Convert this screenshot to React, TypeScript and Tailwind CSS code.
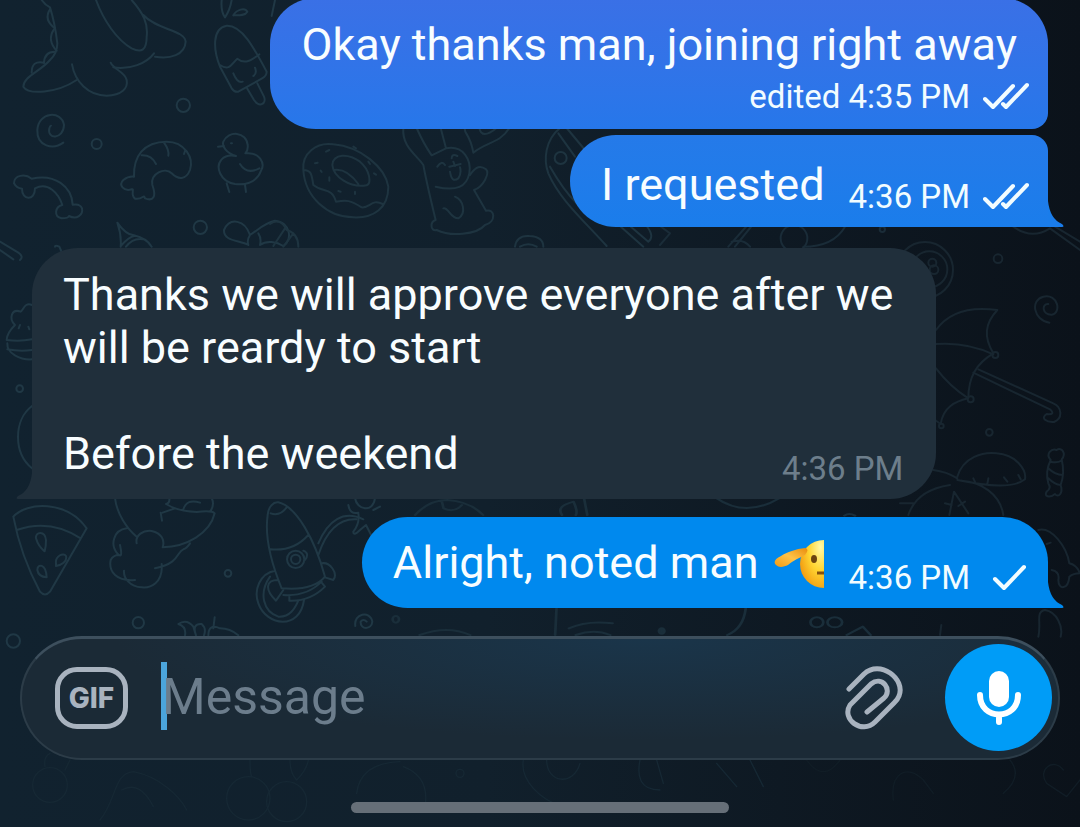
import React, { useState } from 'react';

type Status = 'read' | 'sent';

interface Message {
  id: number;
  text: string;
  lastLine?: string;
  time: string;
  mine: boolean;
  edited?: boolean;
  status?: Status;
  salute?: boolean;
  className: string;
}

const messages: Message[] = [
  {
    id: 1,
    text: 'Okay thanks man, joining right away',
    time: '4:35 PM',
    mine: true,
    edited: true,
    status: 'read',
    className: 'rounded-[46px] rounded-br-[16px] bg-linear-to-b from-[#3a70e6] to-[#2677ea] pt-5 pb-3',
  },
  {
    id: 2,
    text: 'I requested',
    time: '4:36 PM',
    mine: true,
    status: 'read',
    className: 'mt-[6px] rounded-l-[46px] rounded-tr-[16px] bg-linear-to-b from-[#257ae9] to-[#1a7deb] pt-[23px] pb-[10px]',
  },
  {
    id: 3,
    text: 'Thanks we will approve everyone after we\nwill be reardy to start\n\n',
    lastLine: 'Before the weekend',
    time: '4:36 PM',
    mine: false,
    className: 'mt-[21px] rounded-[46px] rounded-bl-none bg-[#202f3b] pt-5 pb-[10px]',
  },
  {
    id: 4,
    text: 'Alright, noted man',
    time: '4:36 PM',
    mine: true,
    status: 'sent',
    salute: true,
    className: 'mt-[18px] rounded-l-[46px] rounded-tr-[46px] bg-[#0089ee] pt-[19px] pb-[10px]',
  },
];

// Doodles are drawn on a 3x grid and grouped by screen area
function Wallpaper() {
  return (
    <svg
      className="absolute inset-0 h-full w-full"
      viewBox="0 0 1080 827"
      preserveAspectRatio="xMidYMid slice"
      fill="none"
      strokeWidth="6"
      strokeLinecap="round"
      strokeLinejoin="round"
      aria-hidden="true"
    >
      {/* Dinosaur, ice cream, spiral, shrimp, duck, bone */}
      <g transform="scale(0.33333)" stroke="#203845">
        <path d="M125 0Q135 15 150 22Q165 70 172 130Q172 160 150 180C120 215 70 230 70 260C85 285 170 280 230 240" />
        <path d="M150 28Q130 60 165 85M162 88Q140 120 170 152M165 155Q132 155 132 190M132 188Q95 180 95 218" />
        <path d="M288 0C310 60 350 120 395 145C425 160 440 150 440 110C445 70 430 40 395 0M430 45C470 90 555 90 557 125C555 165 510 178 465 170M462 160C440 190 390 210 340 202" />
        <path d="M216 193C225 245 265 287 320 287C365 285 385 265 380 240C375 215 340 208 332 188" />
        <path d="M665 0Q662 35 675 52Q690 30 695 0M700 46C710 28 735 22 742 35C735 48 715 46 700 46M815 48L825 0" />
        <path d="M660 200C640 150 635 85 680 77C725 75 760 140 800 215Q800 228 785 236L715 275Q704 278 695 265ZM660 195C690 215 695 190 712 176C735 195 755 180 778 163M700 220Q712 250 728 245M765 203Q772 220 760 228M742 266L762 300C780 325 800 310 792 290L772 250" />
        <circle cx="550" cy="316" r="20" />
        <circle cx="290" cy="432" r="15" />
        <circle cx="601" cy="682" r="20" />
        <path d="M190 428C160 450 110 440 112 390C115 335 185 330 192 375C190 420 140 418 148 385Q150 378 153 377" />
        <path d="M402 530C400 470 430 425 500 425C555 425 582 475 570 510C558 540 535 540 515 520C495 500 450 520 457 555C470 590 460 605 435 595C430 580 430 600 405 596C390 585 405 565 395 568C370 575 355 555 370 540Q385 528 402 530M425 466Q455 465 468 492M492 428Q508 450 505 467M556 450L552 462" />
        <path d="M708 468C680 460 665 440 670 425C685 390 740 395 743 435Q745 450 736 460C780 455 795 490 784 510C770 550 735 555 705 552C660 545 645 500 665 478Q680 462 708 468M654 440L672 438M720 492Q740 525 778 505M680 550L688 576M735 555L738 576M693 430L696 430" />
        <path d="M95 536C75 520 42 525 42 550Q50 565 66 566C65 600 105 605 105 565C145 545 175 580 187 615C165 620 160 650 185 655Q205 655 207 648C230 660 250 645 246 625Q240 610 218 614C215 560 165 520 95 536" />
        <path d="M362 740Q365 705 352 668Q378 705 402 706Q440 715 455 740M362 738Q385 712 402 708M378 740Q400 712 430 718M165 740Q165 735 178 740L185 756M0 725L55 758Q72 770 60 780M0 750L40 778" />
        <path d="M745 735C720 720 670 725 672 690C690 650 735 660 750 705C775 690 790 670 825 662C870 665 880 720 850 738C830 725 800 720 780 735M750 705Q740 720 745 735M775 700Q785 715 780 735" />
        {/* Acorn peeking out from behind the incoming bubble */}
        <path d="M96 915C75 905 70 930 62 935C35 925 25 955 45 975C30 990 20 1005 20 1020Q60 1025 96 1018M22 1030C20 1060 60 1080 96 1078M60 975L56 985M85 980L88 988M22 1048Q60 1055 96 1050M96 1218C40 1260 40 1360 96 1405" />
        <circle cx="59" cy="1166" r="10" />
      </g>
      {/* Donut, rabbit, skateboard */}
      <g transform="translate(270 0) scale(0.33333)" stroke="#1e3440">
        <path d="M100 510C95 460 140 425 190 433C270 440 345 500 355 560C355 625 310 655 250 652C170 650 105 590 100 510C125 510 125 525 130 555C160 580 185 560 198 605C230 600 240 600 275 622C300 625 305 595 338 612" />
        <path d="M187 495C190 460 235 460 270 485C300 510 305 550 290 556C240 565 190 530 187 495M192 510C220 505 245 525 265 552M135 490L143 488M168 455L178 450M178 532L178 542M205 573L212 575M255 575L255 582M312 520L318 524M295 485L300 492M152 512L155 516M250 440L258 445" />
        <path d="M400 384C395 440 440 465 460 495C470 550 485 610 497 660C480 665 480 695 500 690C540 710 620 705 645 675C680 665 675 625 648 632L612 570C640 560 660 520 648 508C625 490 610 510 600 525M440 384Q460 430 485 466L528 445L512 384M528 445C580 435 605 480 598 520C590 560 560 575 497 560M520 625C535 620 540 655 565 655C590 640 580 600 555 590" />
        <path d="M502 500Q515 480 525 495M545 475Q545 460 562 468M538 500L572 492M540 515Q545 550 565 535Q575 520 570 502M550 485L555 498M585 384C580 400 600 400 610 458C650 425 690 430 718 384M628 384Q635 420 680 384" />
        <path d="M870 384C825 420 820 480 835 520C870 600 940 660 1010 738M865 400L915 470M840 500Q880 570 920 610M890 384L945 450M1050 678L1120 740M1080 678L1135 725Q1155 710 1130 678" />
        <circle cx="872" cy="474" r="18" />
        <path d="M735 740Q740 705 778 708Q820 710 820 740M750 740Q775 725 800 740M0 672Q30 650 50 690Q85 700 85 740M10 738L45 685M40 740L70 700" />
      </g>
      {/* Wand and balloon between the bubbles */}
      <g transform="translate(660 0) scale(0.33333)" stroke="#1a2c38">
        <path d="M0 678L30 700L0 735M205 740L260 678M225 740L275 678M215 725Q250 715 270 740M430 740Q520 740 555 680" />
        <circle cx="402" cy="715" r="40" />
        <circle cx="667" cy="688" r="8" />
      </g>
      {/* Right edge: pool ball, umbrella, candy, beach */}
      <g transform="translate(900 220) scale(0.33333)" stroke="#182630">
        <circle cx="75" cy="150" r="84" />
        <circle cx="88" cy="148" r="54" />
        <circle cx="97" cy="128" r="12" />
        <circle cx="102" cy="149" r="13" />
        <circle cx="294" cy="116" r="13" />
        <circle cx="268" cy="637" r="10" />
        <path d="M340 20Q395 60 450 25L540 90M465 20L540 65M448 308C400 300 390 240 430 230C475 220 485 280 455 284C425 285 425 250 445 252" />
        <path d="M108 330C150 270 220 260 292 270C255 310 250 350 280 400C230 430 205 470 205 535C165 545 130 560 122 612L105 600M108 372Q200 365 280 403M108 445Q150 500 205 535" />
        <circle cx="286" cy="405" r="9" />
        <circle cx="212" cy="538" r="9" />
        <circle cx="124" cy="618" r="7" />
        <path d="M220 458L450 568Q468 585 440 582C420 595 440 608 462 606C490 595 485 560 460 550L235 448" />
        <path d="M172 770C190 710 250 695 290 700C350 705 380 750 375 778C340 805 270 800 172 780M100 750Q140 755 172 775M0 850L40 850M25 885Q50 810 150 795M185 782C240 785 300 820 310 885M220 775L226 788M265 775L262 792M312 772L322 785M355 765L362 778M148 885L162 815L205 880M135 850L155 855M195 845L175 858" />
        <path d="M452 720C435 700 455 685 470 690C485 680 500 700 485 718Q495 760 482 795C490 820 475 835 465 822C450 835 430 830 440 815Q455 805 445 790Q435 755 452 720M452 725Q470 730 485 722M445 745Q465 765 488 765M445 775Q465 795 482 795" />
        <path d="M415 930C455 920 500 980 508 1030Q530 1035 540 1060Q520 1060 508 1070C505 1110 475 1110 475 1080Q480 1055 455 1050M440 972L452 968M415 1250C425 1210 405 1175 435 1170C470 1175 490 1220 482 1250M120 1245L124 1215" />
      </g>
      {/* Pizza, chick, rocket */}
      <g transform="translate(0 480) scale(0.33333)" stroke="#203845">
        <path d="M40 110C80 65 200 60 260 145L150 335Q135 352 120 335C85 270 55 190 40 110M50 150Q150 115 242 175M108 175C105 155 135 150 138 180Q138 200 134 214Q115 200 108 175M168 250C165 230 190 215 198 228C202 245 185 255 168 258ZM112 270C112 250 138 250 140 292Q115 290 112 270" />
        <path d="M345 54C350 100 380 145 410 170M410 190C405 165 430 150 455 153C485 160 495 180 488 202C560 200 630 160 644 100Q635 90 590 96C550 95 520 85 498 72Q510 70 508 54M635 54Q645 75 630 95M550 88Q560 55 600 68M488 98L525 85M482 98L486 122M570 190Q560 205 550 208C530 215 540 250 465 265M485 252C490 310 450 325 425 322C390 320 370 295 372 272M405 300C350 305 325 275 332 240Q340 225 357 225M380 145C340 150 330 195 352 220Q370 240 360 195" />
        <path d="M845 325C810 240 795 160 803 105C805 80 820 65 835 67C890 80 945 180 975 290C950 320 900 330 845 325M812 100Q840 110 860 82M812 208Q880 215 925 165M850 345Q920 350 965 305M868 350L868 362Q930 365 975 320L965 308M835 300C795 300 795 330 828 362L850 330M965 250C990 245 1015 280 1000 300L975 292M825 272C780 280 760 330 775 370C800 440 900 450 912 360M810 290C775 340 790 395 835 410C870 412 885 385 895 362M955 190C985 120 1030 90 1090 118M955 225C980 150 1020 115 1070 118" />
        <circle cx="887" cy="238" r="26" />
        <circle cx="887" cy="238" r="14" />
        <path d="M1065 54C1070 90 1120 100 1125 54M1045 75Q1050 105 1075 98M1075 100Q1080 130 1060 155Q1060 170 1080 150L1098 135L1115 168M1120 90L1140 80M910 212Q930 220 915 240" />
        <circle cx="684" cy="280" r="10" />
        <circle cx="415" cy="428" r="17" />
        <circle cx="40" cy="483" r="20" />
        <path d="M555 466Q560 440 535 432Q560 415 580 440L588 466M588 466Q575 430 605 432Q620 445 612 466M625 466Q625 430 660 445Q690 445 715 466M644 412L640 445M1066 438C1060 400 1110 390 1117 425C1115 450 1080 450 1082 425Q1090 415 1100 425" />
      </g>
      {/* Strips above and below the last bubble */}
      <g transform="translate(360 485) scale(0.45918 0.33333)" stroke="#1a2e3a">
        <path d="M120 90Q150 45 190 45Q240 50 268 90M178 48L182 70Q205 85 222 60M440 90C430 70 440 60 465 50Q475 80 470 90M488 40L495 90M775 38Q840 100 915 38M1055 92Q1065 82 1078 92M428 370L425 450M455 430Q495 405 550 415M470 450Q510 430 545 450M840 370Q835 430 800 450M130 450Q190 420 240 450M1060 450L1095 425L1112 450" />
        <ellipse cx="78" cy="403" rx="7" ry="10" />
        <ellipse cx="657" cy="438" rx="6" ry="8" fill="#1a2e3a" />
        <ellipse cx="995" cy="412" rx="14" ry="15" />
        <ellipse cx="1034" cy="412" rx="16" ry="15" />
      </g>
      {/* Faded bottom row */}
      <g transform="translate(0 620) scale(0.33333)" stroke="#162834" strokeWidth="4">
        <circle cx="150" cy="495" r="52" />
        <path d="M135 440Q130 410 150 400M195 450L210 420M300 600C350 540 340 460 400 455C480 470 540 530 560 570M365 510Q420 480 460 560M750 420Q750 460 755 470M870 420Q870 460 890 480Q920 450 925 420M1070 520Q1080 430 1200 425" />
        <circle cx="745" cy="535" r="65" />
        <circle cx="860" cy="545" r="60" />
        <circle cx="1380" cy="460" r="12" />
        <path d="M1210 440Q1290 470 1275 560M1570 420C1560 480 1620 540 1690 560M1640 420C1640 490 1720 500 1740 430M1920 420C1910 470 1920 510 1980 510M1970 420L1990 490M2150 430L2210 500M2250 420L2290 500" />
      </g>
      <g transform="translate(780 620) scale(0.33333)" stroke="#111d26" strokeWidth="4">
        <path d="M340 540C330 460 380 430 430 480L460 520M850 450C820 410 770 450 800 490L860 530L900 480M690 420Q730 470 670 520M80 420Q130 490 180 420" />
      </g>
    </svg>
  );
}

function StatusIcon({ status }: { status: Status }) {
  return (
    <svg
      className="h-8 w-[46px] shrink-0"
      viewBox="0 0 46 32"
      fill="none"
      stroke="#f2fcff"
      strokeWidth="4"
      strokeLinecap="round"
      strokeLinejoin="round"
      role="img"
      aria-label={status === 'read' ? 'Read' : 'Sent'}
    >
      {status === 'read' ? (
        <path d="M2 18L10 26L30 5M20 23L23 26L44 4" />
      ) : (
        <path d="M12 17L21 26L41 5" />
      )}
    </svg>
  );
}

function Salute() {
  return (
    <svg className="ml-[15px] h-[50px] w-[51px] shrink-0" viewBox="0 0 51 50" role="img" aria-label="Saluting face">
      <defs>
        <radialGradient id="face" cx="0.85" cy="0.15" r="0.95">
          <stop offset="0" stopColor="#fff9a8" />
          <stop offset="0.5" stopColor="#ffd633" />
          <stop offset="1" stopColor="#f29a10" />
        </radialGradient>
        <linearGradient id="hand" x1="0" y1="1" x2="1" y2="0">
          <stop offset="0" stopColor="#f39a12" />
          <stop offset="0.5" stopColor="#ffc247" />
          <stop offset="1" stopColor="#e88c0c" />
        </linearGradient>
      </defs>
      <path d="M50 1A24 24 0 0 0 50 49Z" fill="url(#face)" />
      <path d="M31 9C22 10 13 13 7 17C1 20 -1 23 2 26C5 29 10 28 14 26C20 21 25 19 31 16Q36 10 31 9Z" fill="url(#hand)" />
      <ellipse cx="40" cy="20" rx="3" ry="4" fill="#6b4410" />
      <path d="M43 34H50" stroke="#84500f" strokeWidth="3" />
    </svg>
  );
}

function Tail({ mine }: { mine: boolean }) {
  return mine ? (
    <svg className="absolute bottom-0 left-full h-[26px] w-4" viewBox="0 0 16 26" aria-hidden="true">
      <path d="M0 0Q2 18 14 23Q17 26 14 26H0Z" fill="currentColor" />
    </svg>
  ) : (
    <svg className="absolute right-full bottom-0 h-[26px] w-4" viewBox="0 0 16 26" aria-hidden="true">
      <path d="M16 0Q14 18 2 23Q-1 26 2 26H16Z" fill="currentColor" />
    </svg>
  );
}

function MessageTime({ message }: { message: Message }) {
  return (
    <span
      className={`flex shrink-0 items-center gap-[13px] text-[33px] leading-10 whitespace-nowrap ${
        message.mine ? 'text-[#f2fcff]' : 'text-[#6d7e8b]'
      }`}
    >
      <span>
        {message.edited && 'edited '}
        {message.time}
      </span>
      {message.status && <StatusIcon status={message.status} />}
    </span>
  );
}

function BubbleContent({ message }: { message: Message }) {
  if (message.edited) {
    return (
      <div className="flex flex-col pr-[19px] pl-[31px]">
        <p className="pr-3">{message.text}</p>
        <div className="mt-[6px] self-end">
          <MessageTime message={message} />
        </div>
      </div>
    );
  }

  if (message.lastLine) {
    return (
      <div className="flex flex-col pr-[33px] pl-[31px]">
        <p className="pr-[10px] whitespace-pre-line">{message.text}</p>
        <div className="flex items-end justify-between">
          <p className="pb-[9px]">{message.lastLine}</p>
          <MessageTime message={message} />
        </div>
      </div>
    );
  }

  return (
    <div className="flex items-end gap-6 pr-[19px] pl-[31px]">
      <div className={`flex items-end ${message.salute ? 'pb-[9px]' : 'pb-[6px]'}`}>
        <p>{message.text}</p>
        {message.salute && <Salute />}
      </div>
      <MessageTime message={message} />
    </div>
  );
}

function Bubble({ message }: { message: Message }) {
  const tailColor = !message.mine ? 'text-[#202f3b]' : message.id === 2 ? 'text-[#1a7deb]' : 'text-[#0089ee]';

  return (
    <li
      className={`relative w-fit shrink-0 text-[45px] leading-[53px] ${
        message.mine ? 'self-end' : 'self-start'
      } ${message.className}`}
    >
      <div className="text-[#f8fdff]">
        <BubbleContent message={message} />
      </div>
      {!message.edited && (
        <span className={tailColor}>
          <Tail mine={message.mine} />
        </span>
      )}
    </li>
  );
}

export default function App() {
  const [draft, setDraft] = useState('');

  return (
    <div className="relative flex h-screen flex-col overflow-hidden bg-linear-to-r from-[#11222f] via-[#11202c] via-45% to-[#0b121a] font-['Roboto',sans-serif]">
      <Wallpaper />

      {/* Messages */}
      <main className="relative flex min-h-0 flex-1 flex-col overflow-hidden">
        <ul className="flex min-h-0 flex-1 flex-col justify-end px-8">
          {messages.map((message) => (
            <Bubble key={message.id} message={message} />
          ))}
        </ul>
      </main>

      {/* Composer */}
      <form
        className="relative mx-5 mt-7 flex h-[124px] shrink-0 items-center rounded-full border-2 border-t-3 border-[#2c3c48] border-t-[#3d4f5d] bg-[#1b2a36] bg-[radial-gradient(ellipse_at_60%_0%,#1a354a,#1b2a36_60%)] pr-[6px] pb-[2px] pl-[33px]"
        onSubmit={(e) => e.preventDefault()}
      >
        <button
          type="button"
          className="flex h-[62px] w-[73px] shrink-0 items-center justify-center rounded-[22px] border-5 border-[#a9b3bf] font-['Inter',sans-serif] text-[28px] leading-8 font-extrabold text-[#a9b3bf]"
        >
          GIF
        </button>
        <span className="mb-1 ml-[33px] h-[68px] w-[6px] shrink-0 bg-[#4ba5dc]" />
        <input
          aria-label="Message"
          placeholder="Message"
          value={draft}
          onChange={(e) => setDraft(e.target.value)}
          className="-ml-[5px] min-w-0 flex-1 bg-transparent pb-[2px] text-[50px] leading-[60px] text-white outline-none placeholder:text-[#6c7d8c]"
        />
        <button type="button" aria-label="Attach" className="mr-[42px] shrink-0 pb-[2px]">
          <svg
            className="h-[66px] w-[58px]"
            viewBox="0 0 58 66"
            fill="none"
            stroke="#a9b3bf"
            strokeWidth="5"
            strokeLinecap="round"
            strokeLinejoin="round"
          >
            <path d="M4 25L19 10C35 -5 61 15 54 32C53 35 51 37 49 39L30 58C17 71 -4 55 5 41L26 20C37 11 48 26 39 34L22 48" />
          </svg>
        </button>
        <button
          type="button"
          aria-label="Record voice message"
          className="flex size-[107px] shrink-0 items-center justify-center rounded-full bg-[#009cf7]"
        >
          <svg className="h-[56px] w-[46px]" viewBox="0 0 46 56" fill="none" stroke="#fff" strokeWidth="6" strokeLinecap="round">
            <rect x="13" y="1" width="20" height="36" rx="10" fill="#fff" stroke="none" />
            <path d="M4 25C4 51 42 51 42 25M23 45V52" />
          </svg>
        </button>
      </form>

      {/* Home indicator */}
      <div className="relative mx-auto mt-[42px] mb-[14px] h-[11px] w-[35%] shrink-0 rounded-full bg-[#666f78]" />
    </div>
  );
}
